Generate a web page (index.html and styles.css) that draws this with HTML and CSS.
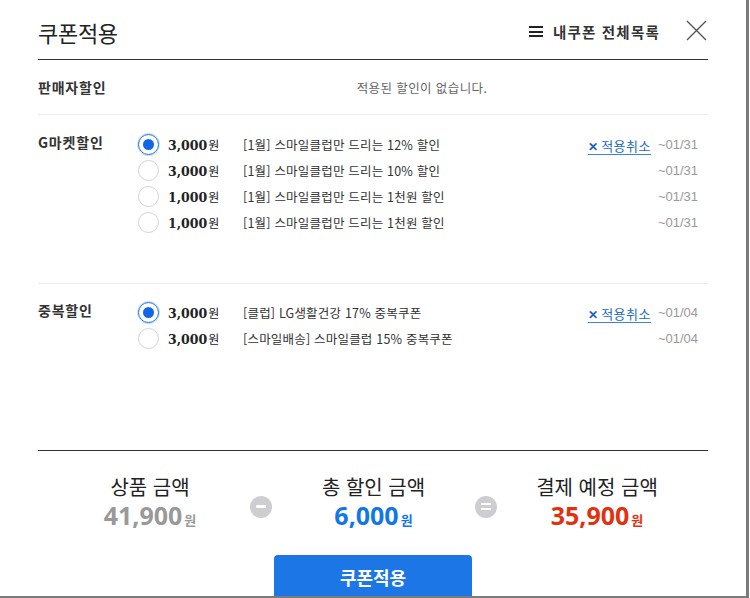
FILE: index.html
```html
<!DOCTYPE html>
<html lang="ko">
<head>
<meta charset="utf-8">
<link rel="stylesheet" href="styles.css">
</head>
<body>
<div class="modal">
  <header class="head">
    <h1 class="title">쿠폰적용</h1>
    <a class="mylist"><span class="burger"><i></i><i></i><i></i></span>내쿠폰 전체목록</a>
    <span class="close">
      <svg width="21" height="21" viewBox="0 0 21 21"><path d="M1 1 L20 20 M20 1 L1 20" stroke="#555" stroke-width="1.4" fill="none"/></svg>
    </span>
  </header>

  <section class="seller">
    <div class="label">판매자할인</div>
    <div class="none">적용된 할인이 없습니다.</div>
  </section>

  <section class="group g1">
    <div class="label">G마켓할인</div>
    <ul class="rows">
      <li class="row"><span class="radio on"></span><span class="amt">3,000<em>원</em></span><span class="desc">[1월] 스마일클럽만 드리는 12% 할인</span><a class="cancel"><b>✕</b>적용취소</a><span class="date">~01/31</span></li>
      <li class="row"><span class="radio"></span><span class="amt">3,000<em>원</em></span><span class="desc">[1월] 스마일클럽만 드리는 10% 할인</span><span class="date">~01/31</span></li>
      <li class="row"><span class="radio"></span><span class="amt">1,000<em>원</em></span><span class="desc">[1월] 스마일클럽만 드리는 1천원 할인</span><span class="date">~01/31</span></li>
      <li class="row"><span class="radio"></span><span class="amt">1,000<em>원</em></span><span class="desc">[1월] 스마일클럽만 드리는 1천원 할인</span><span class="date">~01/31</span></li>
    </ul>
  </section>

  <section class="group g2">
    <div class="label">중복할인</div>
    <ul class="rows">
      <li class="row"><span class="radio on"></span><span class="amt">3,000<em>원</em></span><span class="desc">[클럽] LG생활건강 17% 중복쿠폰</span><a class="cancel"><b>✕</b>적용취소</a><span class="date">~01/04</span></li>
      <li class="row"><span class="radio"></span><span class="amt">3,000<em>원</em></span><span class="desc">[스마일배송] 스마일클럽 15% 중복쿠폰</span><span class="date">~01/04</span></li>
    </ul>
  </section>

  <section class="summary">
    <div class="sum">
      <div class="sum-title">상품 금액</div>
      <div class="sum-val gray">41,900<em>원</em></div>
    </div>
    <span class="op"><i class="minus"></i></span>
    <div class="sum">
      <div class="sum-title">총 할인 금액</div>
      <div class="sum-val blue">6,000<em>원</em></div>
    </div>
    <span class="op"><i class="eq"></i></span>
    <div class="sum">
      <div class="sum-title">결제 예정 금액</div>
      <div class="sum-val red">35,900<em>원</em></div>
    </div>
  </section>

  <div class="actions">
    <button class="apply">쿠폰적용</button>
  </div>
</div>
</body>
</html>
```

FILE: styles.css
```css
html, body {
  margin: 0;
  padding: 0;
  background: #fff;
}
body {
  width: 750px;
  height: 598px;
  overflow: hidden;
  font-family: "Noto Sans CJK KR", "Noto Sans", sans-serif;
  color: #222;
}
.modal {
  box-sizing: border-box;
  width: 749px;
  height: 598px;
  padding: 0 38px 0 38px;
  border-right: 3px solid #7b7b7b;
  border-bottom: 2px solid #7b7b7b;
  overflow: hidden;
  background: #fff;
}
.head {
  display: flex;
  align-items: center;
  height: 59px;
  border-bottom: 1px solid #333;
}
.title {
  margin: 0;
  font-size: 22px;
  font-weight: 400;
  color: #222;
  letter-spacing: -0.3px;
  flex: 1;
  padding-top: 4px;
}
.mylist {
  display: flex;
  align-items: center;
  font-size: 14.5px;
  font-weight: 700;
  letter-spacing: 1.2px;
  color: #333;
  padding-top: 4px;
}
.burger {
  display: flex;
  flex-direction: column;
  justify-content: space-between;
  width: 14px;
  height: 11px;
  margin-right: 10px;
}
.burger i {
  display: block;
  height: 2px;
  background: #222;
}
.close {
  display: flex;
  margin-left: 26px;
  margin-right: 1px;
  padding-top: 2px;
}
.seller {
  display: flex;
  align-items: center;
  height: 54px;
  border-bottom: 1px solid #ececec;
}
.label {
  width: 100px;
  font-size: 14px;
  font-weight: 700;
  letter-spacing: 0.8px;
  color: #333;
  flex: none;
}
.none {
  flex: 1;
  text-align: center;
  font-size: 12.5px;
  letter-spacing: 0.4px;
  color: #666;
  padding-right: 2px;
}
.group {
  display: flex;
  align-items: flex-start;
  border-bottom: 1px solid #ececec;
}
.g1 { padding: 16px 0 48px; }
.g2 { padding: 15px 0 0; border-bottom: 1px solid #333; box-sizing: border-box; height: 167px; }
.group .label { line-height: 26px; margin-top: -2px; }
.rows {
  list-style: none;
  margin: 0;
  padding: 0;
  flex: 1;
}
.row {
  display: flex;
  align-items: center;
  height: 26px;
}
.radio {
  box-sizing: border-box;
  width: 21px;
  height: 21px;
  border-radius: 50%;
  border: 1px solid #d3d3d3;
  flex: none;
  position: relative;
}
.radio.on {
  border-color: #1a73e8;
  box-shadow: 0 0 0 1px #cfe0f8;
}
.radio.on::after {
  content: "";
  position: absolute;
  left: 4px;
  top: 4px;
  width: 11px;
  height: 11px;
  border-radius: 50%;
  background: #1166e8;
}
.amt {
  width: 75px;
  margin-left: 9px;
  font-family: "DejaVu Serif", serif;
  font-weight: 700;
  font-size: 12.5px;
  color: #222;
  flex: none;
}
.amt em {
  font-style: normal;
  font-family: "Noto Sans CJK KR", sans-serif;
  font-weight: 400;
  font-size: 12px;
  margin-left: 1px;
}
.desc {
  flex: 1;
  font-size: 12.5px;
  letter-spacing: 0.2px;
  color: #333;
}
.cancel {
  font-size: 13px;
  letter-spacing: 0.5px;
  color: #1a6ac7;
  border-bottom: 1px solid #3a86d4;
  line-height: 17px;
  margin-top: 3px;
}
.cancel b {
  font-size: 12px;
  font-weight: 900;
  margin-right: 3px;
  color: #1a5fc0;
}
.date {
  width: 47px;
  margin-right: 10px;
  text-align: right;
  font-family: "Liberation Sans", sans-serif;
  font-size: 13px;
  color: #999;
  flex: none;
}
.summary {
  display: grid;
  grid-template-columns: 200px 22px 203px 22px 200px;
  align-items: center;
  margin-left: 12px;
  padding-top: 22px;
}
.sum {
  text-align: center;
}
.sum-title {
  font-size: 20px;
  line-height: 28px;
  color: #222;
}
.sum-val {
  font-family: "Open Sans", sans-serif;
  font-weight: 700;
  font-size: 25px;
  line-height: 28px;
}
.sum-val em {
  font-style: normal;
  font-family: "Noto Sans CJK KR", sans-serif;
  font-size: 13px;
  margin-left: 2px;
}
.gray { color: #999; }
.blue { color: #1177e8; }
.red { color: #e2310f; }
.op {
  display: flex;
  justify-content: center;
  align-items: center;
  width: 22px;
  height: 22px;
  border-radius: 50%;
  background: #cdcdd2;
  margin-top: 6px;
}
.op i {
  display: block;
  width: 10px;
  background: #fff;
}
.op .minus { height: 3px; border-radius: 1px; }
.op .eq { height: 7px; background: none; border-top: 2.5px solid #fff; border-bottom: 2.5px solid #fff; box-sizing: border-box; }
.actions {
  display: flex;
  justify-content: center;
  padding-top: 21px;
}
.apply {
  width: 198px;
  height: 46px;
  border: 0;
  border-radius: 4px;
  background: #1c76e6;
  color: #fff;
  font-family: "Noto Sans CJK KR", sans-serif;
  font-size: 18px;
  font-weight: 700;
  padding: 0 0 2px;
}
```
